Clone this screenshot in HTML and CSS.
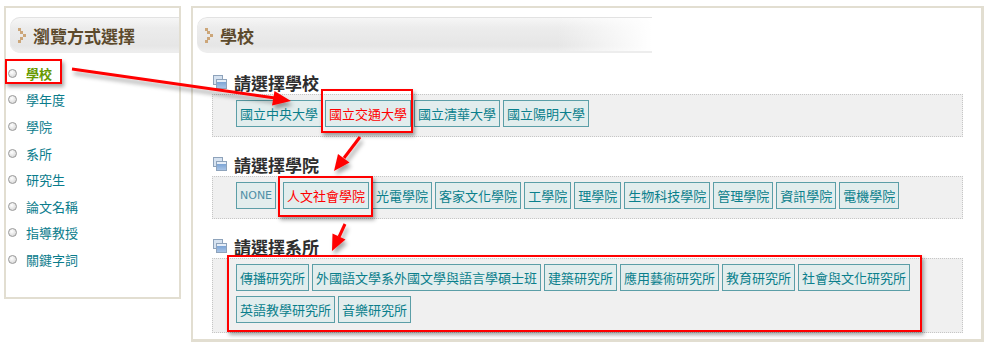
FILE: index.html
```html
<!DOCTYPE html>
<html lang="zh-Hant">
<head>
    <meta charset="UTF-8">
    <title>瀏覽方式選擇</title>
    <link rel="stylesheet" href="styles.css">
</head>
<body>
    <div class="page">
        <div class="sidebar">
            <div class="bar">
                <svg class="chev" width="8" height="15" viewBox="0 0 8 15">
                    <rect x="0" y="0" width="3" height="3"/><rect x="2" y="3" width="3" height="3"/>
                    <rect x="5" y="6" width="3" height="3"/><rect x="2" y="9" width="3" height="3"/>
                    <rect x="0" y="12" width="3" height="3"/>
                </svg>
                <span>瀏覽方式選擇</span>
            </div>
            <ul class="menu">
                <li class="on"><i></i>學校</li>
                <li><i></i>學年度</li>
                <li><i></i>學院</li>
                <li><i></i>系所</li>
                <li><i></i>研究生</li>
                <li><i></i>論文名稱</li>
                <li><i></i>指導教授</li>
                <li><i></i>關鍵字詞</li>
            </ul>
        </div>

        <div class="main">
            <div class="bar wide">
                <svg class="chev" width="8" height="15" viewBox="0 0 8 15">
                    <rect x="0" y="0" width="3" height="3"/><rect x="2" y="3" width="3" height="3"/>
                    <rect x="5" y="6" width="3" height="3"/><rect x="2" y="9" width="3" height="3"/>
                    <rect x="0" y="12" width="3" height="3"/>
                </svg>
                <span>學校</span>
            </div>

            <h3 class="head first"><i class="ico"></i>請選擇學校</h3>
            <div class="box">
                <a class="btn">國立中央大學</a>
                <a class="btn sel">國立交通大學</a>
                <a class="btn">國立清華大學</a>
                <a class="btn">國立陽明大學</a>
            </div>

            <h3 class="head"><i class="ico"></i>請選擇學院</h3>
            <div class="box">
                <a class="btn none">NONE</a>
                <a class="btn sel">人文社會學院</a>
                <a class="btn">光電學院</a>
                <a class="btn">客家文化學院</a>
                <a class="btn">工學院</a>
                <a class="btn">理學院</a>
                <a class="btn">生物科技學院</a>
                <a class="btn">管理學院</a>
                <a class="btn">資訊學院</a>
                <a class="btn">電機學院</a>
            </div>

            <h3 class="head"><i class="ico"></i>請選擇系所</h3>
            <div class="box">
                <a class="btn">傳播研究所</a>
                <a class="btn">外國語文學系外國文學與語言學碩士班</a>
                <a class="btn">建築研究所</a>
                <a class="btn">應用藝術研究所</a>
                <a class="btn">教育研究所</a>
                <a class="btn">社會與文化研究所</a>
                <a class="btn">英語教學研究所</a>
                <a class="btn">音樂研究所</a>
            </div>
        </div>
    </div>

    <!-- annotations drawn over the screenshot -->
    <div class="mark m1"></div>
    <div class="mark m2"></div>
    <div class="mark m3"></div>
    <div class="mark m4"></div>

    <svg class="arrows" width="988" height="347" viewBox="0 0 988 347">
        <defs>
            <filter id="sh" x="-20%" y="-20%" width="140%" height="140%">
                <feDropShadow dx="2" dy="4" stdDeviation="2" flood-color="#000" flood-opacity="0.35"/>
            </filter>
        </defs>
        <g fill="#f00" stroke="#f00" filter="url(#sh)">
            <line x1="72" y1="69" x2="275" y2="98" stroke-width="3"/>
            <polygon points="291,101 272,105.5 274.5,91" stroke="none"/>
            <line x1="360" y1="137" x2="344" y2="158" stroke-width="3"/>
            <polygon points="334,171 349.5,162.5 338,154" stroke="none"/>
            <line x1="345" y1="224" x2="339" y2="237" stroke-width="3"/>
            <polygon points="332,251 345.5,239.5 332.5,233.5" stroke="none"/>
        </g>
    </svg>
</body>
</html>
```

FILE: styles.css
```css
body {
    margin: 0;
    background: #fff;
    font-family: "Noto Sans CJK TC", "Liberation Sans", sans-serif;
}

.page {
    display: flex;
    align-items: flex-start;
    gap: 10px;
    padding: 6px 0 0 4px;
}

/* left column */
.sidebar {
    box-sizing: border-box;
    width: 177px;
    height: 293px;
    border: 2px solid #e2ded1;
    overflow: hidden;
}

.bar {
    display: flex;
    align-items: center;
    height: 36px;
    margin: 9px 0 0 4px;
    padding-left: 8px;
    box-sizing: border-box;
    border-radius: 10px 0 0 10px;
    background: linear-gradient(#f7f7f7, #ececec 30%, #e6e6e6 80%, #f0f0f0);
    box-shadow: inset 0 1px 0 #e2e2e2, inset 0 -2px 0 #ededed;
}

.bar span {
    margin-left: 7px;
    font-size: 17px;
    font-weight: bold;
    color: #5c4a2c;
}

.chev {
    fill: #cca679;
    flex: none;
}

.menu {
    list-style: none;
    margin: 7px 0 0;
    padding: 0 0 0 2px;
}

.menu li {
    display: flex;
    align-items: center;
    height: 26.6px;
    font-size: 13px;
    color: #0a7c8c;
}

.menu li i {
    width: 7px;
    height: 7px;
    margin-right: 9px;
    border: 1px solid #999;
    border-radius: 50%;
    background: radial-gradient(circle at 40% 35%, #fff, #cfcfcf);
}

.menu li.on {
    color: #669900;
    font-weight: bold;
}

/* main column */
.main {
    box-sizing: border-box;
    width: 793px;
    height: 336px;
    border: 2px solid #e2ded1;
    border-right-width: 3px;
    border-bottom-width: 3px;
    padding: 0 0 0 4px;
}

.bar.wide {
    width: 455px;
    margin-left: 0;
    background:
        linear-gradient(to right, rgba(255,255,255,0) 360px, #fff 455px),
        linear-gradient(#f7f7f7, #ececec 30%, #e6e6e6 80%, #f0f0f0);
}

.head {
    display: flex;
    align-items: center;
    height: 24px;
    margin: 15px 0 0 16px;
    font-size: 17px;
    font-weight: bold;
    color: #2e2e2e;
}

.head.first {
    margin-top: 17px;
}

.ico {
    position: relative;
    width: 14px;
    height: 14px;
    margin-right: 7px;
}

.ico::before,
.ico::after {
    content: "";
    position: absolute;
    box-sizing: border-box;
    border: 1px solid #8ea3bb;
}

.ico::before {
    left: 0;
    top: 0;
    width: 10px;
    height: 10px;
    background: #d6e2f0;
}

.ico::after {
    left: 3px;
    top: 4px;
    width: 11px;
    height: 10px;
    background: linear-gradient(#e6eef8 30%, #7fa6d6 30%, #a9c4e6);
}

.box {
    display: flex;
    flex-wrap: wrap;
    gap: 5px 3px;
    width: 751px;
    box-sizing: border-box;
    margin-left: 15px;
    padding: 5px 20px 9px 23px;
    border: 1px dotted #c6c6c6;
    background: #f0f0f0;
}

.btn {
    display: block;
    height: 27px;
    box-sizing: border-box;
    padding: 0 3px;
    line-height: 25px;
    font-size: 13px;
    color: #0a7f8c;
    background: #e2eded;
    border: 1px solid #5b9ea7;
}

.btn.sel {
    color: #f00;
}

.btn.none {
    margin-right: 4px;
    font-family: "DejaVu Sans", sans-serif;
    font-size: 11px;
    color: #4f8fa6;
}

/* red annotation boxes */
.mark {
    position: absolute;
    box-sizing: border-box;
    border: 2px solid #f00;
    box-shadow: 2px 3px 4px rgba(0, 0, 0, 0.35);
}

.m1 { left: 5px; top: 59px; width: 57px; height: 25px; }
.m2 { left: 321px; top: 89px; width: 92px; height: 44px; }
.m3 { left: 278px; top: 176px; width: 95px; height: 41px; }
.m4 { left: 227px; top: 255px; width: 695px; height: 77px; }

.arrows {
    position: absolute;
    left: 0;
    top: 0;
    pointer-events: none;
}
```
